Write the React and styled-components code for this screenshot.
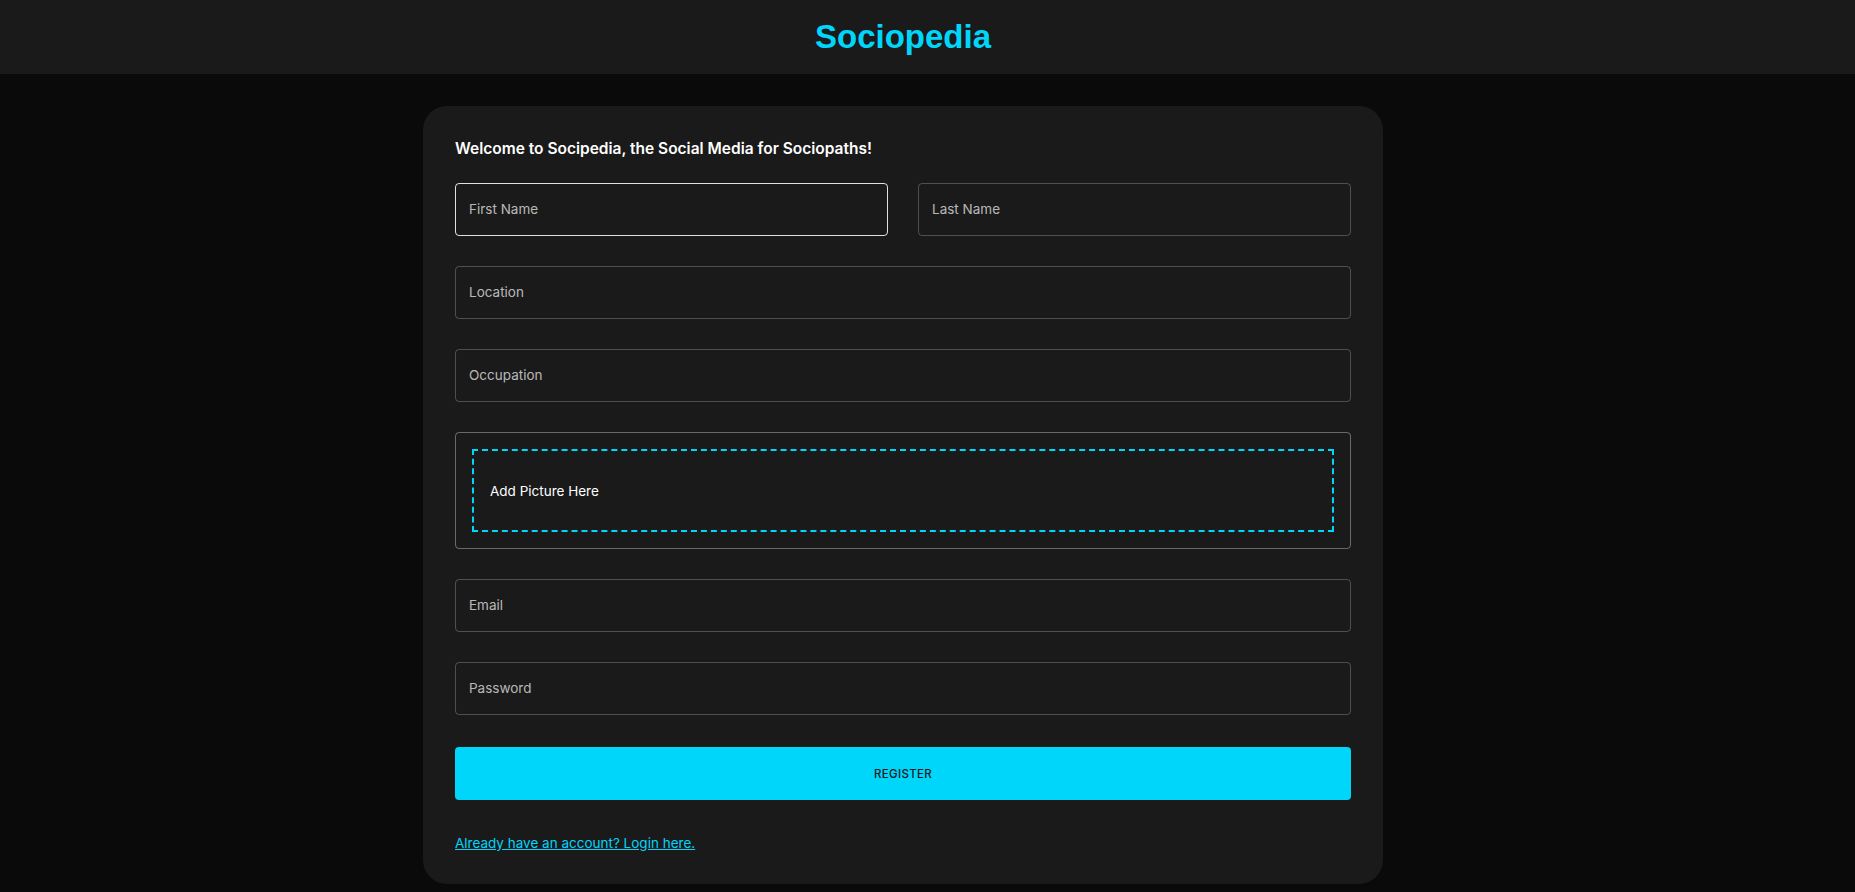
import React from "react";
import styled, { createGlobalStyle } from "styled-components";

const GlobalStyle = createGlobalStyle`
  html, body {
    margin: 0;
    padding: 0;
    background: #0a0a0a;
    overflow: hidden;
  }
  * { box-sizing: border-box; }
  body {
    font-family: Inter, "Noto Sans", "Liberation Sans", sans-serif;
    color: #e0e0e0;
  }
`;

const Header = styled.header`
  background: #1a1a1a;
  display: flex;
  justify-content: center;
  padding: 16px 6%;
  padding-right: calc(6% + 49px);
`;

const Brand = styled.h1`
  margin: 0;
  font-family: "Liberation Sans", Arial, sans-serif;
  font-weight: 700;
  font-size: 33px;
  line-height: 42px;
  color: #00d5fa;
`;

const Main = styled.main`
  display: flex;
  justify-content: center;
  padding-right: 49px;
`;

const Card = styled.section`
  width: 960px;
  margin: 32px 0;
  padding: 32px;
  border-radius: 24px;
  background: #1a1a1a;
`;

const Welcome = styled.h5`
  margin: 0 0 24px;
  font-size: 15.5px;
  font-weight: 600;
  line-height: 21px;
  color: #ffffff;
`;

const FormGrid = styled.form`
  display: grid;
  grid-template-columns: repeat(4, minmax(0, 1fr));
  gap: 30px;
`;

const Field = styled.input`
  grid-column: span ${(p) => p.$span || 4};
  height: 53px;
  padding: 0 14px 2px 13px;
  border-radius: 4px;
  border: 1px solid ${(p) => (p.$active ? "rgba(255,255,255,0.87)" : "rgba(255,255,255,0.23)")};
  background: transparent;
  color: #e0e0e0;
  font-family: inherit;
  font-size: 13.5px;
  outline: none;
  &::placeholder {
    color: rgba(255, 255, 255, 0.7);
  }
`;

const PictureBox = styled.div`
  grid-column: span 4;
  padding: 16px;
  border: 1px solid rgba(255, 255, 255, 0.35);
  border-radius: 4px;
`;

const DropZone = styled.div`
  border: 2px dashed #00d5fa;
  padding: 16px;
  height: 83px;
  display: flex;
  align-items: center;
  cursor: pointer;
`;

const DropText = styled.p`
  margin: 0;
  font-size: 13.5px;
  color: #ffffff;
`;

const Actions = styled.div`
  grid-column: span 4;
`;

const SubmitButton = styled.button`
  display: block;
  width: 100%;
  height: 53px;
  margin: 2px 0 32px;
  border: none;
  border-radius: 4px;
  background: #00d5fa;
  color: #1a1a1a;
  font-family: inherit;
  font-size: 11.5px;
  font-weight: 500;
  letter-spacing: 0.03em;
  text-transform: uppercase;
  cursor: pointer;
`;

const LoginLink = styled.a`
  display: inline-block;
  font-size: 13.5px;
  line-height: 18px;
  color: #00d5fa;
  text-decoration: underline;
  cursor: pointer;
`;

export default function App() {
  return (
    <>
      <GlobalStyle />
      <Header>
        <Brand>Sociopedia</Brand>
      </Header>
      <Main>
        <Card>
          <Welcome>Welcome to Socipedia, the Social Media for Sociopaths!</Welcome>
          <FormGrid onSubmit={(e) => e.preventDefault()}>
            <Field $span={2} $active placeholder="First Name" />
            <Field $span={2} placeholder="Last Name" />
            <Field placeholder="Location" />
            <Field placeholder="Occupation" />
            <PictureBox>
              <DropZone>
                <DropText>Add Picture Here</DropText>
              </DropZone>
            </PictureBox>
            <Field placeholder="Email" />
            <Field type="password" placeholder="Password" />
            <Actions>
              <SubmitButton type="submit">Register</SubmitButton>
              <LoginLink>Already have an account? Login here.</LoginLink>
            </Actions>
          </FormGrid>
        </Card>
      </Main>
    </>
  );
}
